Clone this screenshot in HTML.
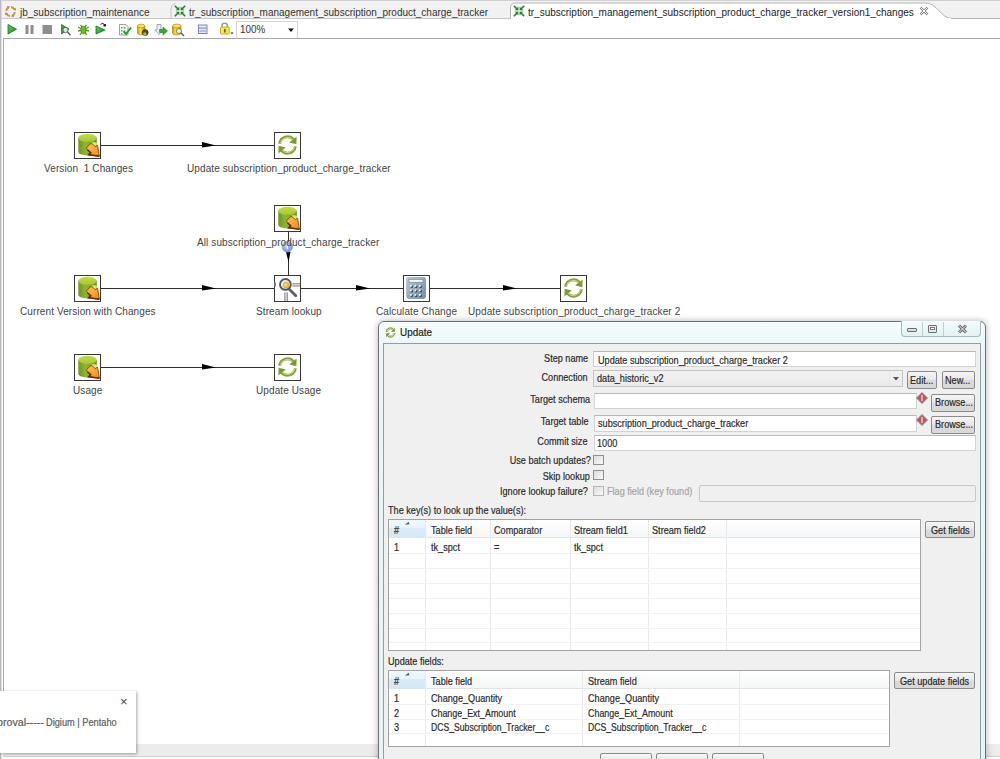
<!DOCTYPE html>
<html><head><meta charset="utf-8">
<style>
*{margin:0;padding:0;box-sizing:border-box}
html,body{width:1000px;height:759px;overflow:hidden;background:#fff;font-family:"Liberation Sans",sans-serif}
.a{position:absolute}
.lbl{position:absolute;font-size:10px;color:#444;letter-spacing:.1px;white-space:nowrap;line-height:14px}
.step{position:absolute;width:27px;height:27px;border:1px solid #383838;background:#fff}
.d{position:absolute;font-size:11px;color:#2a2a2a;white-space:nowrap;line-height:15px;transform:scaleX(.83);transform-origin:0 0;-webkit-text-stroke:.2px currentColor}
.dr{position:absolute;font-size:11px;color:#2a2a2a;white-space:nowrap;line-height:15px;transform:scaleX(.83);transform-origin:100% 0;text-align:right;-webkit-text-stroke:.2px currentColor}
.fld{position:absolute;background:#fff;border:1px solid #d2d2d2;border-top-color:#b8b8b8}
.btn{position:absolute;border:1px solid #8a8a8a;border-radius:2px;background:linear-gradient(#f6f6f6,#e6e6e6 50%,#dadada 51%,#d8d8d8)}
.cb{position:absolute;width:11px;height:10px;border:1px solid #8f8f8f;background:linear-gradient(135deg,#dcdcdc,#fafafa)}
</style></head><body>

<svg width="0" height="0" style="position:absolute">
 <defs>
  <linearGradient id="cyl" x1="0" x2="1" y1="0" y2="0">
   <stop offset="0" stop-color="#6f9722"/><stop offset=".4" stop-color="#8fb630"/><stop offset="1" stop-color="#6a921e"/>
  </linearGradient>
  <linearGradient id="cyltop" x1="0" x2="0" y1="0" y2="1">
   <stop offset="0" stop-color="#c4dc4a"/><stop offset="1" stop-color="#a7c832"/>
  </linearGradient>
  <linearGradient id="orng" x1="0" x2="1" y1="0" y2="1">
   <stop offset="0" stop-color="#ffc35a"/><stop offset="1" stop-color="#f08a10"/>
  </linearGradient>
  <linearGradient id="calc" x1="0" x2="1" y1="0" y2="1">
   <stop offset="0" stop-color="#b9c8d6"/><stop offset="1" stop-color="#7890a6"/>
  </linearGradient>
  <radialGradient id="mag" cx=".45" cy=".45" r=".6">
   <stop offset="0" stop-color="#ffe07a"/><stop offset="1" stop-color="#d9a22c"/>
  </radialGradient>
  <symbol id="tin" viewBox="0 0 27 26">
   <path d="M4.3 5.8 V19.8 C4.3 24.6 22.8 24.6 22.8 19.8 V5.8Z" fill="url(#cyl)"/>
   <ellipse cx="13.55" cy="5.8" rx="9.25" ry="4" fill="url(#cyltop)"/>
   <path d="M17.5 10.5 C19.5 10 22 10 22.8 11 V17 L18 13Z" fill="#d4ea7c"/>
   <path d="M12.8 15.5 L16 12.2 C17 11.4 18.2 11.6 19 12.4 L21.2 14.6 L23.6 13.2 L25.4 24.2 L14.6 22.8 L16.8 20.8 L13.5 17.8 C12.8 17.1 12.4 16.2 12.8 15.5Z" fill="url(#orng)" stroke="#7a2e08" stroke-width=".8"/>
   <path d="M13.5 17.8 L16.8 20.8 L14.6 22.8 L25.4 24.2" stroke="#6a2206" stroke-width="1.4" fill="none"/>
  </symbol>
  <symbol id="upd" viewBox="0 0 27 26">
   <g fill="none" stroke="#86a03a" stroke-width="2.8">
    <path d="M5.6 11.8 A8 8 0 0 1 19.6 7.6"/>
    <path d="M21.4 14.2 A8 8 0 0 1 7.4 18.4"/>
   </g>
   <g fill="none" stroke="#c8da86" stroke-width="1">
    <path d="M6.2 11.6 A7.4 7.4 0 0 1 19.2 8"/>
    <path d="M20.8 14.4 A7.4 7.4 0 0 1 7.8 18"/>
   </g>
   <path d="M22.6 4.6 L22.4 12.2 L15.2 10.6Z" fill="#7d9a30"/>
   <path d="M4.4 21.4 L4.6 13.8 L11.8 15.4Z" fill="#7d9a30"/>
  </symbol>
  <symbol id="slk" viewBox="0 0 27 26">
   <rect x="18.5" y="8" width="7.5" height="3.6" fill="#9a9a9a"/><rect x="18.5" y="9" width="7.5" height="1.4" fill="#d8d8d8"/>
   <rect x="10.2" y="17.5" width="3.8" height="8.5" fill="#9a9a9a"/><rect x="11.4" y="17.5" width="1.4" height="8.5" fill="#d8d8d8"/>
   <rect x="0" y="7.5" width="2" height="4" fill="#7c74a8"/>
   <path d="M15.5 14.5 L21.8 20.8" stroke="#5f5f5f" stroke-width="2.8" stroke-linecap="round"/>
   <circle cx="11.4" cy="9.4" r="5.4" fill="#ececec" stroke="#575757" stroke-width="1.9"/>
   <circle cx="12" cy="10" r="3.2" fill="url(#mag)"/>
  </symbol>
  <symbol id="calcs" viewBox="0 0 27 26">
   <rect x="3.6" y="2.2" width="19.2" height="21.6" rx="2.2" fill="#6d8296"/>
   <rect x="3.4" y="2" width="18.6" height="21" rx="2" fill="url(#calc)"/>
   <rect x="6" y="4.3" width="14" height="3" fill="#f6f9fc" stroke="#6f8396" stroke-width=".7"/>
   <rect x="7.6" y="10.6" width="2.2" height="2.2" fill="#2c3e50"/><rect x="7.0" y="10.0" width="1.8" height="1.8" fill="#eef5fc"/><rect x="12.1" y="10.6" width="2.2" height="2.2" fill="#2c3e50"/><rect x="11.5" y="10.0" width="1.8" height="1.8" fill="#eef5fc"/><rect x="16.6" y="10.6" width="2.2" height="2.2" fill="#2c3e50"/><rect x="16.0" y="10.0" width="1.8" height="1.8" fill="#eef5fc"/><rect x="7.6" y="15.1" width="2.2" height="2.2" fill="#2c3e50"/><rect x="7.0" y="14.5" width="1.8" height="1.8" fill="#eef5fc"/><rect x="12.1" y="15.1" width="2.2" height="2.2" fill="#2c3e50"/><rect x="11.5" y="14.5" width="1.8" height="1.8" fill="#eef5fc"/><rect x="16.6" y="15.1" width="2.2" height="2.2" fill="#2c3e50"/><rect x="16.0" y="14.5" width="1.8" height="1.8" fill="#eef5fc"/><rect x="7.6" y="19.6" width="2.2" height="2.2" fill="#2c3e50"/><rect x="7.0" y="19.0" width="1.8" height="1.8" fill="#eef5fc"/><rect x="12.1" y="19.6" width="2.2" height="2.2" fill="#2c3e50"/><rect x="11.5" y="19.0" width="1.8" height="1.8" fill="#eef5fc"/><rect x="16.6" y="19.6" width="2.2" height="2.2" fill="#2c3e50"/><rect x="16.0" y="19.0" width="1.8" height="1.8" fill="#eef5fc"/>
  </symbol>
 </defs>
</svg>

<!-- tab bar -->
<div class="a" style="left:0;top:0;width:1000px;height:19px;background:#f1f1f1;border-top:1px solid #cfcfcf"></div>
<div class="a" style="left:0;top:0;width:2px;height:759px;background:linear-gradient(90deg,#b9b9b9 50%,#dedede 50%)"></div>
<div class="a" style="left:0;top:18px;width:1000px;height:1px;background:#c6c6c6"></div>
<!-- active tab -->
<svg class="a" style="left:500px;top:0" width="500" height="20">
 <path d="M10.5 19 L10.5 8 Q10.5 3 16 3 L425 3 C438 3 440 18 452 18.5 L500 18.5" fill="#fff" stroke="#b3b3b3" stroke-width="1"/>
 <rect x="11" y="18" width="440" height="2" fill="#fff"/>
</svg>
<svg class="a" style="left:165px;top:0" width="14" height="20"><path d="M6 19 V9 Q6 5 10.5 3" stroke="#c4c4c4" fill="none"/></svg>
<!-- tab icons -->
<svg class="a" style="left:4px;top:5px" width="13" height="13" viewBox="0 0 13 13">
 <g fill="none" stroke="#c99a4a" stroke-width="2">
 <path d="M2.2 6 A4.6 4.6 0 0 1 4.5 2.4"/><path d="M7 1.9 A4.6 4.6 0 0 1 10.6 4.5"/><path d="M10.8 7 A4.6 4.6 0 0 1 8.5 10.6"/><path d="M6 11.1 A4.6 4.6 0 0 1 2.4 8.5"/>
 </g>
 <g fill="#b8863a"><path d="M3 1L6 1.5 4 4Z"/><path d="M12 3L11.5 6 9 4Z"/><path d="M10 12L7 11.5 9 9Z"/><path d="M1 10L1.5 7 4 9Z"/></g>
</svg>
<div class="a" style="left:20px;top:6px;font-size:10px;color:#333;line-height:14px">jb_subscription_maintenance</div>
<svg class="a" style="left:174px;top:5px" width="12" height="12" viewBox="0 0 12 12">
 <rect x="1.5" y="1.5" width="9" height="9" fill="#dcf3dc"/><g stroke="#2f7a32" stroke-width="1.6"><path d="M0.8 0.8L3.8 3.8M11.2 0.8L8.2 3.8M0.8 11.2L3.8 8.2M11.2 11.2L8.2 8.2"/></g><g fill="#2f7a32"><path d="M5.3 5.3V1.8L1.8 5.3Z"/><path d="M6.7 5.3V1.8L10.2 5.3Z"/><path d="M5.3 6.7V10.2L1.8 6.7Z"/><path d="M6.7 6.7V10.2L10.2 6.7Z"/></g>
</svg>
<div class="a" style="left:189px;top:6px;font-size:10px;color:#333;line-height:14px">tr_subscription_management_subscription_product_charge_tracker</div>
<svg class="a" style="left:513px;top:5px" width="12" height="12" viewBox="0 0 12 12">
 <rect x="1.5" y="1.5" width="9" height="9" fill="#dcf3dc"/><g stroke="#2f7a32" stroke-width="1.6"><path d="M0.8 0.8L3.8 3.8M11.2 0.8L8.2 3.8M0.8 11.2L3.8 8.2M11.2 11.2L8.2 8.2"/></g><g fill="#2f7a32"><path d="M5.3 5.3V1.8L1.8 5.3Z"/><path d="M6.7 5.3V1.8L10.2 5.3Z"/><path d="M5.3 6.7V10.2L1.8 6.7Z"/><path d="M6.7 6.7V10.2L10.2 6.7Z"/></g>
</svg>
<div class="a" style="left:528px;top:6px;font-size:10px;color:#222;line-height:14px">tr_subscription_management_subscription_product_charge_tracker_version1_changes</div>
<svg class="a" style="left:919px;top:6px" width="10" height="10" viewBox="0 0 10 10"><path d="M1.5 1.5L8.5 8.5M8.5 1.5L1.5 8.5" stroke="#777" stroke-width="2.4"/><path d="M1.5 1.5L8.5 8.5M8.5 1.5L1.5 8.5" stroke="#fff" stroke-width="1"/></svg>

<!-- toolbar -->
<svg class="a" style="left:0;top:19px" width="310" height="19" viewBox="0 19 310 19">
 <defs>
  <linearGradient id="grn" x1="0" x2="1" y1="0" y2="1"><stop offset="0" stop-color="#5fcf5f"/><stop offset="1" stop-color="#1e8a1e"/></linearGradient>
  <linearGradient id="ylw" x1="0" x2="1"><stop offset="0" stop-color="#c9a400"/><stop offset=".4" stop-color="#f7e04a"/><stop offset="1" stop-color="#c8a000"/></linearGradient>
 </defs>
 <!-- play -->
 <path d="M8 24.5 L16.5 29.2 L8 34Z" fill="url(#grn)" stroke="#1b6e1b" stroke-width=".8"/>
 <!-- pause -->
 <rect x="25.5" y="25" width="3" height="9" fill="#8e8e8e"/><rect x="30.5" y="25" width="3" height="9" fill="#8e8e8e"/>
 <!-- stop -->
 <rect x="42.5" y="25" width="9.5" height="9" fill="#8e8e8e"/>
 <!-- preview -->
 <path d="M61.5 24.5 L69 29 L61.5 34Z" fill="#4a9a4a" stroke="#2f6f2f" stroke-width=".8"/>
 <circle cx="65.5" cy="30" r="2.6" fill="#d9ecd9" stroke="#3c6a3c" stroke-width=".9"/>
 <path d="M67.5 32 L70.5 35.2" stroke="#555" stroke-width="1.4"/>
 <!-- debug bug -->
 <g stroke="#4f9a1c" stroke-width="1.3" fill="none">
  <path d="M78 27 L82 29 M78 31 L82 30 M80 35 L82.5 31 M89 27 L85 29 M89 31 L85 30 M86.5 35 L84.5 31 M80.5 25 L82.5 27.5 M86.5 25 L84.5 27.5"/>
 </g>
 <ellipse cx="83.5" cy="30" rx="2.6" ry="3.8" fill="#6cbf22" stroke="#3f7f12" stroke-width=".7"/>
 <!-- replay -->
 <path d="M96 26 L105 30 L96 34Z" fill="url(#grn)" stroke="#1b6e1b" stroke-width=".8"/>
 <path d="M100.5 24.5 Q102 22.5 104 24" stroke="#333" stroke-width="1" fill="none"/>
 <rect x="103.5" y="24.2" width="2.5" height="2.2" fill="#111"/>
 <!-- verify -->
 <path d="M119.5 24.5 H126 L128 26.5 V35 H119.5Z" fill="#f6f6f6" stroke="#8c8c8c" stroke-width=".8"/>
 <g fill="#7a9a7a"><rect x="121" y="27" width="1.5" height="1.5"/><rect x="123.5" y="27" width="2" height="1.5"/><rect x="121" y="30" width="1.5" height="1.5"/><rect x="121" y="33" width="1.5" height="1.2"/></g>
 <path d="M123.5 31 L126 34 L131 27.5" stroke="#2c9a2c" stroke-width="2" fill="none"/>
 <!-- db impact -->
 <path d="M137.5 26 V33 C137.5 35.5 145 35.5 145 33 V26Z" fill="url(#ylw)" stroke="#9a7e00" stroke-width=".6"/>
 <ellipse cx="141.2" cy="26" rx="3.7" ry="1.8" fill="#f5e36a" stroke="#9a7e00" stroke-width=".6"/>
 <circle cx="145.2" cy="32.5" r="3" fill="#5a4a2a" stroke="#3a2a10" stroke-width=".6"/>
 <circle cx="144.8" cy="33.8" r="1.6" fill="#8fbf6f"/>
 <!-- sql -->
 <path d="M157 24.5 H161 V30 H163 L159 34.5 L155 30 H157Z" fill="#eef0f2" stroke="#8a949c" stroke-width=".8"/>
 <path d="M159.5 29.5 H163 V27 L167.5 31 L163 35 V32.5 H159.5Z" fill="#33aa33" stroke="#1d7a1d" stroke-width=".6"/>
 <!-- explore db -->
 <path d="M172.5 26 V33 C172.5 35.5 181 35.5 181 33 V26Z" fill="url(#ylw)" stroke="#9a7e00" stroke-width=".6"/>
 <ellipse cx="176.8" cy="26" rx="4.3" ry="1.9" fill="#f5e36a" stroke="#9a7e00" stroke-width=".6"/>
 <circle cx="179" cy="31" r="2.5" fill="#f4f4ec" stroke="#777" stroke-width=".9"/>
 <path d="M180.8 32.8 L184 36" stroke="#555" stroke-width="1.4"/>
 <!-- layout -->
 <rect x="198.5" y="25" width="8.5" height="8.5" fill="#e8eaf4" stroke="#7c83b4" stroke-width="1"/>
 <rect x="199" y="27.5" width="7.5" height="1.2" fill="#8c92c0"/>
 <rect x="199.5" y="30.2" width="6.5" height="1.6" fill="#a8aed6"/>
 <!-- lock -->
 <path d="M222 27 V25.5 Q222 23.2 224.7 23.2 Q227.4 23.2 227.4 25.5 V27" stroke="#9a9a9a" stroke-width="1.4" fill="none"/>
 <rect x="220.5" y="27" width="8.8" height="7" rx="1" fill="#f2e84a" stroke="#b0a020" stroke-width=".8"/>
 <path d="M224.9 29 V32.5" stroke="#333" stroke-width="1.2"/>
 <path d="M230.5 32.5 H233.5 L232 34.2Z" fill="#222"/>
</svg>
<div class="a" style="left:236px;top:21px;width:62px;height:17px;border:1px solid #d5d5d5;border-bottom:none;background:#fff"></div>
<div class="a" style="left:240px;top:22px;font-size:11px;color:#333;line-height:14px;transform:scaleX(.9);transform-origin:0 0">100%</div>
<svg class="a" style="left:288px;top:28px" width="7" height="5"><path d="M0 0.5H6L3 4Z" fill="#111"/></svg>


<!-- canvas -->
<div class="a" style="left:3px;top:38px;width:997px;height:706px;border-left:1px solid #a8a8a8;border-top:1px solid #a8a8a8;background:#fff"></div>
<div class="a" style="left:3px;top:744px;width:997px;height:13px;background:#ececec;border-bottom:1px solid #cfcfcf"></div>

<!-- hops -->
<svg class="a" style="left:0;top:0" width="1000" height="759">
 <g stroke="#2e2e2e" stroke-width="1" fill="none">
  <path d="M101 145.5H274.5"/>
  <path d="M101 288.5H274.5"/>
  <path d="M301 288.5H403.5"/>
  <path d="M430 288.5H560"/>
  <path d="M101 367.5H274.5"/>
  <path d="M288.5 231V275"/>
 </g>
 <g fill="#000">
  <path d="M202 142 L216 145.5 L202 147.5Z"/>
  <path d="M202 285 L216 288.5 L202 290.5Z"/>
  <path d="M356 285 L370 288.5 L356 290.5Z"/>
  <path d="M503 285 L517 288.5 L503 290.5Z"/>
  <path d="M202 364 L216 367.5 L202 369.5Z"/>
  <path d="M286 252 L288.5 262 L290.5 252Z"/>
 </g>
 <defs><radialGradient id="info" cx=".4" cy=".35" r=".7"><stop offset="0" stop-color="#c4d6f7"/><stop offset="1" stop-color="#6a8ad2"/></radialGradient></defs>
 <circle cx="287.3" cy="246.8" r="5.4" fill="url(#info)" stroke="#8aa3dc" stroke-width=".5"/>
 <rect x="286.7" y="245.5" width="1.3" height="3.8" fill="#fff"/><rect x="286.7" y="243.3" width="1.3" height="1.2" fill="#fff"/>
</svg>

<!-- steps -->
<div class="step" style="left:74px;top:132px"></div>
<svg class="a" style="left:74px;top:132px" width="27" height="26"><use href="#tin"/></svg>
<div class="step" style="left:274px;top:132px"></div>
<svg class="a" style="left:274px;top:132px" width="27" height="26"><use href="#upd"/></svg>
<div class="step" style="left:274px;top:205px"></div>
<svg class="a" style="left:274px;top:205px" width="27" height="26"><use href="#tin"/></svg>
<div class="step" style="left:274px;top:275px"></div>
<svg class="a" style="left:274px;top:275px" width="27" height="26"><use href="#slk"/></svg>
<div class="step" style="left:403px;top:275px"></div>
<svg class="a" style="left:403px;top:275px" width="27" height="26"><use href="#calcs"/></svg>
<div class="step" style="left:560px;top:275px"></div>
<svg class="a" style="left:560px;top:275px" width="27" height="26"><use href="#upd"/></svg>
<div class="step" style="left:74px;top:275px"></div>
<svg class="a" style="left:74px;top:275px" width="27" height="26"><use href="#tin"/></svg>
<div class="step" style="left:74px;top:354px"></div>
<svg class="a" style="left:74px;top:354px" width="27" height="26"><use href="#tin"/></svg>
<div class="step" style="left:274px;top:354px"></div>
<svg class="a" style="left:274px;top:354px" width="27" height="26"><use href="#upd"/></svg>

<div class="lbl" style="left:44px;top:162px">Version&nbsp; 1 Changes</div>
<div class="lbl" style="left:187px;top:162px">Update subscription_product_charge_tracker</div>
<div class="lbl" style="left:197px;top:236px">All subscription_product_charge_tracker</div>
<div class="lbl" style="left:20px;top:305px">Current Version with Changes</div>
<div class="lbl" style="left:256px;top:305px">Stream lookup</div>
<div class="lbl" style="left:376px;top:305px">Calculate Change</div>
<div class="lbl" style="left:468px;top:305px">Update subscription_product_charge_tracker 2</div>
<div class="lbl" style="left:73px;top:384px">Usage</div>
<div class="lbl" style="left:256px;top:384px">Update Usage</div>

<!-- dialog -->
<div class="a" style="left:378px;top:321px;width:608px;height:450px;border:1px solid #6b7378;border-radius:6px 6px 0 0;background:linear-gradient(#f6fcfd,#e8f6f7 30px,#e2f4f4);box-shadow:0 0 7px rgba(0,0,0,.3)"></div>
<div class="a" style="left:383px;top:343px;width:598px;height:420px;border:1px solid #8e9ea3;background:#f0f0f0"></div>
<div class="d" style="left:400px;top:325px;color:#222;transform:scaleX(.9)">Update</div>
<svg class="a" style="left:385px;top:327px" width="11" height="11" viewBox="0 0 11 11">
 <g fill="none" stroke="#8c9a50" stroke-width="2.2"><path d="M1.6 5 A3.9 3.9 0 0 1 7.8 2.2"/><path d="M9.4 6 A3.9 3.9 0 0 1 3.2 8.8"/></g>
 <g fill="none" stroke="#e4ecc4" stroke-width=".8"><path d="M2 4.9 A3.5 3.5 0 0 1 7.6 2.6"/><path d="M9 6.1 A3.5 3.5 0 0 1 3.4 8.4"/></g>
 <path d="M9.8 0.8 V4.8 H5.8Z" fill="#7a8a3e"/><path d="M1.2 10.2 V6.2 H5.2Z" fill="#7a8a3e"/>
</svg>
<div class="a" style="left:901px;top:321px;width:80px;height:16px;border:1px solid #aab8bc;border-top:none;border-radius:0 0 4px 4px;background:linear-gradient(#f3fbfc,#e3f2f4)"></div>
<div class="a" style="left:922px;top:322px;width:1px;height:14px;background:#c2cfd2"></div>
<div class="a" style="left:943px;top:322px;width:1px;height:14px;background:#c2cfd2"></div>
<div class="a" style="left:907px;top:328px;width:10px;height:4px;border:1px solid #6f6f6f;border-radius:1px;background:#dcdcdc"></div>
<div class="a" style="left:928px;top:325px;width:9px;height:8px;border:1px solid #6f6f6f;border-radius:1px;background:#e8e8e8"></div>
<div class="a" style="left:930px;top:327px;width:5px;height:3px;border:1px solid #7a7a7a;background:#fff"></div>
<svg class="a" style="left:957px;top:324px" width="11" height="10" viewBox="0 0 11 10"><path d="M2 1.5L9 8.5M9 1.5L2 8.5" stroke="#6a6a6a" stroke-width="3"/><path d="M2 1.5L9 8.5M9 1.5L2 8.5" stroke="#f0f0f0" stroke-width="1"/></svg>



<!-- dialog content -->
<div class="dr" style="right:412px;top:351px">Step name</div>
<div class="dr" style="right:412px;top:370px">Connection</div>
<div class="dr" style="right:410px;top:392px">Target schema</div>
<div class="dr" style="right:412px;top:414px">Target table</div>
<div class="dr" style="right:412px;top:434px">Commit size</div>
<div class="dr" style="right:409px;top:453px">Use batch updates?</div>
<div class="dr" style="right:410px;top:469px">Skip lookup</div>
<div class="dr" style="right:412px;top:484px">Ignore lookup failure?</div>

<div class="fld" style="left:593px;top:351px;width:383px;height:16px"></div>
<div class="d" style="left:598px;top:353px">Update subscription_product_charge_tracker 2</div>
<div class="a" style="left:593px;top:370px;width:310px;height:17px;border:1px solid #c4c4c4;background:linear-gradient(#f2f2f2,#ebebeb)"></div>
<div class="a" style="left:889px;top:371px;width:1px;height:15px;background:#e6e6e6"></div>
<svg class="a" style="left:893px;top:377px" width="7" height="4"><path d="M0 0H6L3 3.5Z" fill="#555"/></svg>
<div class="d" style="left:597px;top:371px">data_historic_v2</div>
<div class="btn" style="left:907px;top:371px;width:30px;height:18px"></div>
<div class="d" style="left:910px;top:373px">Edit...</div>
<div class="btn" style="left:942px;top:371px;width:33px;height:18px"></div>
<div class="d" style="left:945px;top:373px">New...</div>

<div class="fld" style="left:594px;top:393px;width:323px;height:16px"></div>
<div class="fld" style="left:594px;top:415px;width:323px;height:17px"></div>
<div class="d" style="left:598px;top:416px">subscription_product_charge_tracker</div>
<svg class="a" style="left:916px;top:392px" width="12" height="12" viewBox="0 0 12 12"><path d="M6 0.5L11.5 6 6 11.5 0.5 6Z" fill="#b9585e" stroke="#8a8f8f" stroke-width="1"/><path d="M6 3v6" stroke="#fff" stroke-width="1"/></svg>
<svg class="a" style="left:916px;top:414px" width="12" height="12" viewBox="0 0 12 12"><path d="M6 0.5L11.5 6 6 11.5 0.5 6Z" fill="#b9585e" stroke="#8a8f8f" stroke-width="1"/><path d="M6 3v6" stroke="#fff" stroke-width="1"/></svg>
<div class="btn" style="left:931px;top:394px;width:44px;height:18px"></div>
<div class="d" style="left:935px;top:395px">Browse...</div>
<div class="btn" style="left:931px;top:416px;width:44px;height:18px"></div>
<div class="d" style="left:935px;top:417px">Browse...</div>

<div class="fld" style="left:594px;top:435px;width:382px;height:16px"></div>
<div class="d" style="left:597px;top:436px">1000</div>

<div class="cb" style="left:593px;top:455px"></div>
<div class="cb" style="left:593px;top:470px"></div>
<div class="cb" style="left:593px;top:486px;border-color:#b5b5b5"></div>
<div class="d" style="left:607px;top:484px;color:#a3a3a3">Flag field (key found)</div>
<div class="a" style="left:699px;top:485px;width:277px;height:17px;border:1px solid #c8c8c8;background:#f0f0f0;border-radius:2px"></div>

<div class="d" style="left:388px;top:503px">The key(s) to look up the value(s):</div>
<div class="a" style="left:388px;top:519px;width:533px;height:132px;border:1px solid #a3a3a3;background:#fff"></div>
<div class="a" style="left:389px;top:520px;width:531px;height:18px;background:linear-gradient(#fff,#f5f6f7);border-bottom:1px solid #e3e4e5"></div>
<div class="a" style="left:389px;top:520px;width:37px;height:18px;background:linear-gradient(#f0f8fc 0,#e8f3fa 45%,#daeaf6 46%,#d6e8f5);border-right:1px solid #c3d3dc"></div>
<div class="a" style="left:425px;top:520px;width:1px;height:130px;background:#e9e9e9"></div>
<div class="a" style="left:490px;top:520px;width:1px;height:130px;background:#e9e9e9"></div>
<div class="a" style="left:570px;top:520px;width:1px;height:130px;background:#e9e9e9"></div>
<div class="a" style="left:648px;top:520px;width:1px;height:130px;background:#e9e9e9"></div>
<div class="a" style="left:726px;top:520px;width:1px;height:130px;background:#e9e9e9"></div>
<div class="a" style="left:389px;top:553px;width:531px;height:1px;background:#f1f1f1"></div>
<div class="a" style="left:389px;top:568px;width:531px;height:1px;background:#f1f1f1"></div>
<div class="a" style="left:389px;top:583px;width:531px;height:1px;background:#f1f1f1"></div>
<div class="a" style="left:389px;top:598px;width:531px;height:1px;background:#f1f1f1"></div>
<div class="a" style="left:389px;top:613px;width:531px;height:1px;background:#f1f1f1"></div>
<div class="a" style="left:389px;top:628px;width:531px;height:1px;background:#f1f1f1"></div>
<div class="a" style="left:389px;top:642px;width:531px;height:1px;background:#f1f1f1"></div>
<svg class="a" style="left:404px;top:521px" width="7" height="5"><path d="M1 3.8L4.5 0.8 5.5 3.2Z" fill="#555"/></svg>
<div class="d" style="left:394px;top:523px">#</div>
<div class="d" style="left:431px;top:523px">Table field</div>
<div class="d" style="left:494px;top:523px">Comparator</div>
<div class="d" style="left:574px;top:523px">Stream field1</div>
<div class="d" style="left:652px;top:523px">Stream field2</div>
<div class="d" style="left:394px;top:540px">1</div>
<div class="d" style="left:431px;top:540px">tk_spct</div>
<div class="d" style="left:494px;top:540px">=</div>
<div class="d" style="left:574px;top:540px">tk_spct</div>
<div class="btn" style="left:925px;top:521px;width:50px;height:17px"></div>
<div class="d" style="left:931px;top:523px">Get fields</div>

<div class="d" style="left:388px;top:654px">Update fields:</div>
<div class="a" style="left:388px;top:670px;width:502px;height:77px;border:1px solid #a3a3a3;background:#fff"></div>
<div class="a" style="left:389px;top:671px;width:500px;height:18px;background:linear-gradient(#fff,#f5f6f7);border-bottom:1px solid #e3e4e5"></div>
<div class="a" style="left:389px;top:671px;width:37px;height:18px;background:linear-gradient(#f0f8fc 0,#e8f3fa 45%,#daeaf6 46%,#d6e8f5);border-right:1px solid #c3d3dc"></div>
<div class="a" style="left:425px;top:671px;width:1px;height:75px;background:#e9e9e9"></div>
<div class="a" style="left:582px;top:671px;width:1px;height:75px;background:#e9e9e9"></div>
<div class="a" style="left:739px;top:671px;width:1px;height:75px;background:#e9e9e9"></div>
<div class="a" style="left:389px;top:704px;width:500px;height:1px;background:#f1f1f1"></div>
<div class="a" style="left:389px;top:719px;width:500px;height:1px;background:#f1f1f1"></div>
<div class="a" style="left:389px;top:733px;width:500px;height:1px;background:#f1f1f1"></div>
<svg class="a" style="left:404px;top:672px" width="7" height="5"><path d="M1 3.8L4.5 0.8 5.5 3.2Z" fill="#555"/></svg>
<div class="d" style="left:394px;top:674px">#</div>
<div class="d" style="left:431px;top:674px">Table field</div>
<div class="d" style="left:588px;top:674px">Stream field</div>
<div class="d" style="left:394px;top:691px">1</div>
<div class="d" style="left:431px;top:691px">Change_Quantity</div>
<div class="d" style="left:588px;top:691px">Change_Quantity</div>
<div class="d" style="left:394px;top:706px">2</div>
<div class="d" style="left:431px;top:706px;transform:scaleX(.81)">Change_Ext_Amount</div>
<div class="d" style="left:588px;top:706px;transform:scaleX(.81)">Change_Ext_Amount</div>
<div class="d" style="left:394px;top:720px">3</div>
<div class="d" style="left:431px;top:720px;transform:scaleX(.785)">DCS_Subscription_Tracker__c</div>
<div class="d" style="left:588px;top:720px;transform:scaleX(.785)">DCS_Subscription_Tracker__c</div>
<div class="btn" style="left:894px;top:672px;width:81px;height:17px"></div>
<div class="d" style="left:900px;top:674px">Get update fields</div>
<div class="btn" style="left:600px;top:753px;width:52px;height:18px"></div>
<div class="btn" style="left:656px;top:753px;width:52px;height:18px"></div>
<div class="btn" style="left:712px;top:753px;width:52px;height:18px"></div>

<!-- notification popup -->
<div class="a" style="left:0;top:691px;width:136px;height:62px;background:#fff;box-shadow:1px 1px 3px rgba(0,0,0,.35)"></div>
<div class="a" style="left:120px;top:694px;font-size:13px;color:#444">&times;</div>
<div class="d" style="left:-3px;top:715px;color:#5a5a5a;font-size:11px;transform:scaleX(.97)">proval-----</div>
<div class="d" style="left:46px;top:715px;color:#5a5a5a;font-size:11px;transform:scaleX(.84)">Digium | Pentaho</div>
</body></html>
